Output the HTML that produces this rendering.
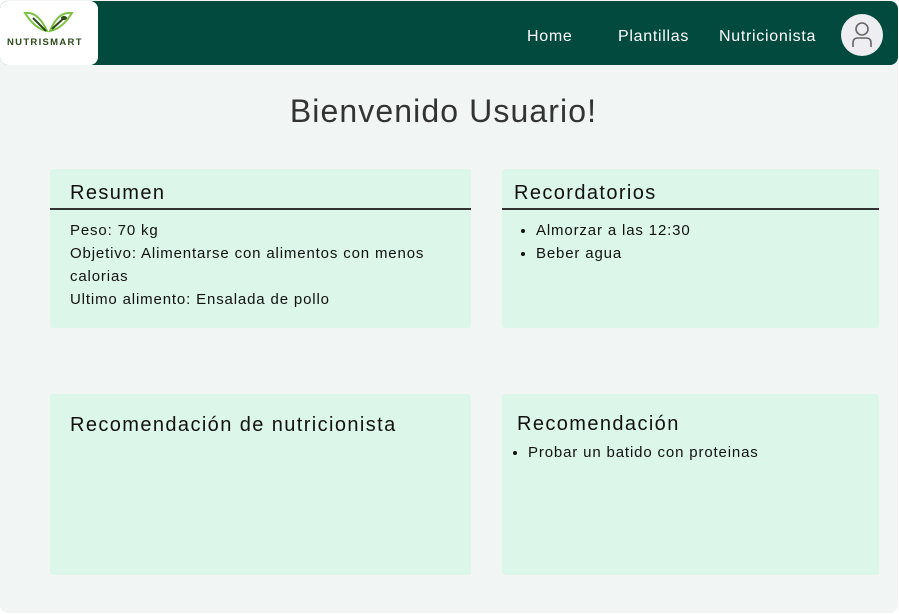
<!DOCTYPE html><html><head><style>
body{margin:0;width:899px;height:614px;background:#fff;font-family:"Liberation Sans",sans-serif;position:relative;overflow:hidden}
.bg{position:absolute;left:0;top:0;width:898px;height:613px;background:#f1f5f3;border-radius:8px}
.nav{position:absolute;left:0;top:1px;width:898px;height:64px;background:#024a3d;border-radius:8px}
.logo{position:absolute;left:0;top:1px;width:98px;height:64px;background:#fff;border-radius:8px}
.nl{position:absolute;top:28px;color:#fff;font-size:16px;letter-spacing:0.7px}
.av{position:absolute;left:841px;top:14px;width:42px;height:42px;border-radius:50%;background:#eeeef2}
h1{position:absolute;left:0;width:887px;top:93px;margin:0;text-align:center;font-weight:normal;font-size:32px;color:#333;letter-spacing:1.1px}
.card{position:absolute;background:#dcf7e9;border-radius:3px}
.t{position:absolute;font-size:20px;color:#111;letter-spacing:1.4px}
.line{position:absolute;left:0;right:0;top:39px;height:2px;background:#333}
.b{position:absolute;font-size:15px;color:#111;line-height:23px;letter-spacing:0.85px}
ul{margin:0;padding-left:20px}
</style></head><body>
<div class="bg"></div>
<div class="nav"></div>
<div class="logo">
<svg width="98" height="40" viewBox="0 0 98 40" style="position:absolute;left:0;top:6px">
<path d="M25 6 Q38 4 47 24 Q35 22 25 6Z" fill="none" stroke="#7cc242" stroke-width="2"/>
<path d="M72 6 Q58 4 50 24 Q62 22 72 6Z" fill="none" stroke="#7cc242" stroke-width="2"/>
<path d="M33 11 L46 24 M52 22 L65 10" stroke="#2d4a1a" stroke-width="2"/>
<ellipse cx="64" cy="11" rx="3" ry="2" fill="#2d4a1a"/>
</svg>
<div style="position:absolute;left:7px;top:36px;font-size:9.5px;font-weight:bold;letter-spacing:1.3px;color:#2d4a1a">NUTRISMART</div>
</div>
<div class="nl" style="left:527px">Home</div>
<div class="nl" style="left:618px">Plantillas</div>
<div class="nl" style="left:719px">Nutricionista</div>
<div class="av"><svg width="42" height="42" viewBox="0 0 42 42"><circle cx="21" cy="15" r="6" fill="none" stroke="#666" stroke-width="1.6"/><path d="M12 33 V29 Q12 24 17 24 H25 Q30 24 30 29 V33" fill="none" stroke="#666" stroke-width="1.6"/></svg></div>
<h1>Bienvenido Usuario!</h1>
<div class="card" style="left:50px;top:169px;width:421px;height:159px">
<div class="t" style="left:20px;top:13px">Resumen</div><div class="line"></div>
<div class="b" style="left:20px;top:50px">Peso: 70 kg<br>Objetivo: Alimentarse con alimentos con menos<br>calorias<br>Ultimo alimento: Ensalada de pollo</div></div>
<div class="card" style="left:502px;top:169px;width:377px;height:159px">
<div class="t" style="left:12px;top:13px">Recordatorios</div><div class="line"></div>
<div class="b" style="left:14px;top:50px"><ul><li>Almorzar a las 12:30</li><li>Beber agua</li></ul></div></div>
<div class="card" style="left:50px;top:394px;width:421px;height:181px">
<div class="t" style="left:20px;top:20px">Recomendación de nutricionista</div></div>
<div class="card" style="left:502px;top:394px;width:377px;height:181px">
<div class="t" style="left:15px;top:19px">Recomendación</div>
<div class="b" style="left:6px;top:47px"><ul><li>Probar un batido con proteinas</li></ul></div></div>
</body></html>
